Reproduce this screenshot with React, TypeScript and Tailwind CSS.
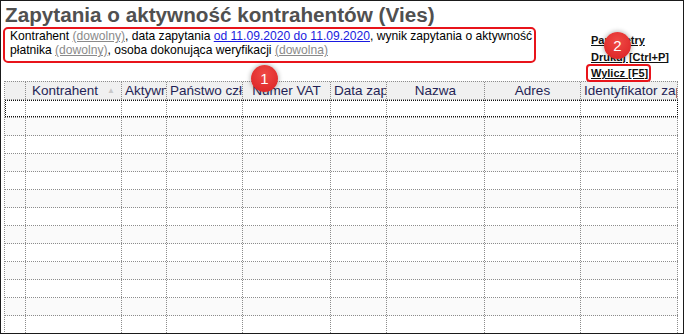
import React from "react";

const cols: { w: string; label: string }[] = [
  { w: "w-[21px]", label: "" },
  { w: "w-[96px]", label: "Kontrahent" },
  { w: "w-[45px]", label: "Aktywny" },
  { w: "w-[76px]", label: "Państwo członkowskie" },
  { w: "w-[88px]", label: "Numer VAT" },
  { w: "w-[56px]", label: "Data zapytania" },
  { w: "w-[98px]", label: "Nazwa" },
  { w: "w-[96px]", label: "Adres" },
  { w: "w-[97px]", label: "Identyfikator zapytania" },
];

function Badge({ n, pos }: { n: string; pos: string }) {
  return (
    <div
      className={`absolute ${pos} w-[27px] h-[27px] rounded-full bg-[radial-gradient(circle_at_50%_35%,#f04a45,#d91f22)] shadow-[0_0_4px_1px_rgba(0,0,0,0.25)] flex items-center justify-center text-white text-[15px] leading-none`}
    >
      {n}
    </div>
  );
}

export default function App() {
  const rows = Array.from({ length: 13 }, (_, i) => i);
  return (
    <div className="relative w-[684px] h-[334px] overflow-hidden border border-[#1a1a1a] bg-white font-['Liberation_Sans',Arial,sans-serif] text-black">
      <div className="flex h-[80px]">
        <div className="w-[590px]">
          <div className="pl-[4px] pt-[2px] text-[20.7px] leading-[24px] font-bold text-[#505050] whitespace-nowrap">
            Zapytania o aktywność kontrahentów (Vies)
          </div>
          <div className="ml-[2px] w-[533px] border-2 border-[#e8141b] rounded-[5px] pl-[5px] pb-[4px] text-[12.1px] leading-[14px] whitespace-nowrap">
            Kontrahent <span className="text-[#8a8a8a] underline">(dowolny)</span>, data zapytania{" "}
            <span className="text-[#1a1ae0] underline">od 11.09.2020 do 11.09.2020</span>, wynik zapytania o aktywność
            <br />
            płatnika <span className="text-[#8a8a8a] underline">(dowolny)</span>, osoba dokonująca weryfikacji{" "}
            <span className="text-[#8a8a8a] underline">(dowolna)</span>
          </div>
        </div>
        <div className="flex-1 pt-[31px] text-[11px] leading-[16.5px] font-bold text-[#111]">
          <div className="underline">Parametry</div>
          <div className="underline">Drukuj [Ctrl+P]</div>
          <div className="relative">
            <span className="underline">Wylicz [F5]</span>
            <div className="absolute left-[-5px] top-[-1px] w-[65px] h-[18px] border-2 border-[#e8141b] rounded-[4px]" />
          </div>
        </div>
      </div>

      <div className="ml-[3px] w-[674px] border-l border-dotted border-[#8c8c8c]">
        <div className="flex h-[19px] bg-[#f0f0f0] border-t border-b border-dotted border-[#8c8c8c] text-[13.5px] leading-[17px] text-[#1f1f55]">
          {cols.map((c, i) => (
            <div
              key={i}
              className={`${c.w} shrink-0 border-r border-dotted border-[#8c8c8c] overflow-hidden whitespace-nowrap px-[3px] text-center`}
            >
              {i === 1 ? (
                <span className="inline-flex items-center gap-[9px]">
                  <span>{c.label}</span>
                  <span className="text-[8px] text-[#c8c8c8]">▲</span>
                </span>
              ) : (
                c.label
              )}
            </div>
          ))}
        </div>
        {rows.map((r) => (
          <div
            key={r}
            className={`relative flex h-[18px] border-b border-dotted border-[#8c8c8c] ${r % 2 === 1 ? "bg-[#fafafa]" : "bg-white"}`}
          >
            {cols.map((c, i) => (
              <div key={i} className={`${c.w} shrink-0 border-r border-dotted border-[#8c8c8c]`} />
            ))}
            {r === 0 && (
              <div className="absolute inset-0 border border-dotted border-[#111] pointer-events-none" />
            )}
          </div>
        ))}
      </div>

      <Badge n="1" pos="left-[250px] top-[64px]" />
      <Badge n="2" pos="left-[603px] top-[31px]" />
    </div>
  );
}
